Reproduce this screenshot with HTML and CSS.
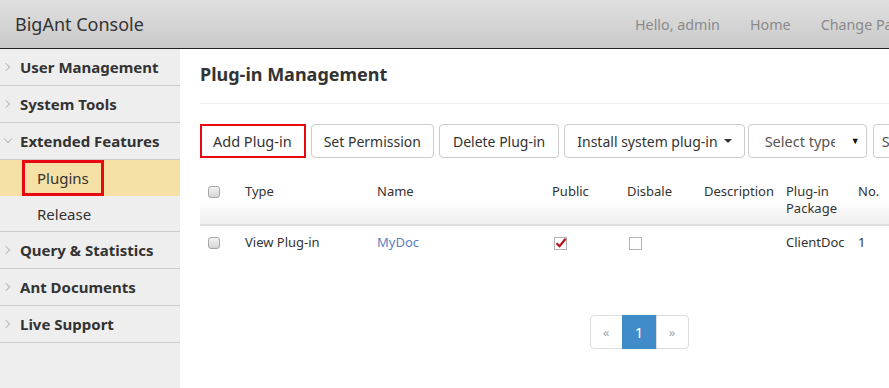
FILE: index.html
```html
<!DOCTYPE html>
<html>
<head>
<meta charset="utf-8">
<link rel="stylesheet" href="styles.css">
</head>
<body>
<div class="page">
  <header class="topbar">
    <div class="brand">BigAnt Console</div>
    <nav class="topnav">
      <a class="toplink">Hello, admin</a>
      <a class="toplink">Home</a>
      <a class="toplink">Change Password</a>
    </nav>
  </header>
  <div class="body">
    <aside class="sidebar">
      <div class="menu-item"><span class="chev right"></span>User Management</div>
      <div class="menu-item"><span class="chev right"></span>System Tools</div>
      <div class="menu-item"><span class="chev down"></span>Extended Features</div>
      <div class="submenu">
        <div class="sub-item active"><span class="hl">Plugins</span></div>
        <div class="sub-item last">Release</div>
      </div>
      <div class="menu-item"><span class="chev right"></span>Query &amp; Statistics</div>
      <div class="menu-item"><span class="chev right"></span>Ant Documents</div>
      <div class="menu-item"><span class="chev right"></span>Live Support</div>
    </aside>
    <main class="main">
      <h1 class="title">Plug-in Management</h1>
      <div class="toolbar">
        <span class="btn btn-marked">Add Plug-in</span>
        <span class="btn">Set Permission</span>
        <span class="btn btn-del">Delete Plug-in</span>
        <span class="btn">Install system plug-in <span class="caret"></span></span>
        <span class="select"><span class="select-text">Select type</span><span class="select-arrow">&#9660;</span></span>
        <span class="select select-2"><span class="select-text">Select status</span></span>
      </div>
      <table class="grid">
        <colgroup>
          <col class="c-cb"><col class="c-type"><col class="c-name"><col class="c-pub"><col class="c-dis"><col class="c-desc"><col class="c-pkg"><col class="c-no"><col class="c-rest">
        </colgroup>
        <thead>
          <tr>
            <th><span class="wcb"></span></th>
            <th>Type</th>
            <th>Name</th>
            <th>Public</th>
            <th>Disbale</th>
            <th>Description</th>
            <th>Plug-in Package</th>
            <th>No.</th>
            <th>Operation</th>
          </tr>
        </thead>
        <tbody>
          <tr>
            <td><span class="wcb"></span></td>
            <td>View Plug-in</td>
            <td><a class="link">MyDoc</a></td>
            <td><span class="sq checked"><svg viewBox="0 0 12 12" width="12" height="12"><path d="M1.5 6.2 L4.6 9.2 L10.6 1.8" fill="none" stroke="#b0141a" stroke-width="2.2"/></svg></span></td>
            <td><span class="sq"></span></td>
            <td></td>
            <td>ClientDoc</td>
            <td>1</td>
            <td></td>
          </tr>
        </tbody>
      </table>
      <div class="pager-wrap">
        <ul class="pager">
          <li class="pg">&laquo;</li>
          <li class="pg active">1</li>
          <li class="pg">&raquo;</li>
        </ul>
      </div>
    </main>
  </div>
</div>
</body>
</html>
```

FILE: styles.css
```css
html, body {
  margin: 0;
  padding: 0;
  overflow: hidden;
  background: #fff;
}
body {
  font-family: "Noto Sans", "Open Sans", sans-serif;
  font-size: 14px;
  color: #333;
}
.page {
  width: 1100px;
  height: 388px;
  display: flex;
  flex-direction: column;
}
.topbar {
  height: 48px;
  border-bottom: 1px solid #222;
  background: linear-gradient(#e0e0e0, #c9c9c9);
  display: flex;
  align-items: center;
  flex: 0 0 auto;
}
.brand {
  flex: 0 0 605px;
  padding-left: 15px;
  font-size: 18px;
  color: #333;
}
.topnav {
  display: flex;
}
.toplink {
  padding: 0 15px;
  font-size: 14.3px;
  color: #8a8a8a;
}
.body {
  flex: 1;
  display: flex;
}
.sidebar {
  flex: 0 0 180px;
  background: #eee;
}
.menu-item {
  height: 36px;
  border-bottom: 1px solid #ccc;
  display: flex;
  align-items: center;
  padding-left: 20px;
  font-weight: bold;
  font-size: 15px;
  color: #333;
  position: relative;
}
.chev {
  position: absolute;
  left: 4px;
  top: 15px;
  width: 5px;
  height: 5px;
  border-right: 1px solid #bbb;
  border-bottom: 1px solid #bbb;
}
.chev.right { transform: rotate(-45deg); left: 3px; }
.chev.down { transform: rotate(45deg); top: 13px; left: 5px; }
.submenu {
  border-bottom: 1px solid #ccc;
}
.sub-item {
  height: 36px;
  display: flex;
  align-items: center;
  padding-left: 37px;
  font-size: 15px;
  color: #333;
}
.sub-item.last {
  height: 35px;
}
.sub-item.active {
  background: #f5e1a5;
  padding-left: 22px;
}
.hl {
  box-sizing: border-box;
  height: 36px;
  border: 3px solid #e8080f;
  padding: 0 12px;
  display: flex;
  align-items: center;
}
.main {
  flex: 1;
  padding-left: 20px;
}
.title {
  margin: 0;
  padding: 13px 0 17px;
  font-size: 18px;
  line-height: 24px;
  font-weight: bold;
  color: #333;
  border-bottom: 1px solid #eee;
}
.toolbar {
  margin-top: 20px;
  display: flex;
  gap: 5px;
  align-items: center;
}
.btn {
  box-sizing: border-box;
  height: 34px;
  padding: 0 12px;
  border: 1px solid #ccc;
  border-radius: 4px;
  display: inline-flex;
  align-items: center;
  font-size: 14px;
  color: #333;
  white-space: nowrap;
}
.btn-marked {
  border: 2px solid #e8080f;
  border-radius: 0;
  padding: 0 12px 0 11px;
  font-size: 14.5px;
}
.btn-del {
  padding: 0 13px;
}
.caret {
  display: inline-block;
  margin-left: 6px;
  border-left: 4px solid transparent;
  border-right: 4px solid transparent;
  border-top: 4px solid #333;
}
.select {
  box-sizing: border-box;
  height: 34px;
  width: 119px;
  margin-left: -2px;
  border: 1px solid #ccc;
  border-radius: 4px;
  display: inline-flex;
  align-items: center;
  padding-left: 16px;
  font-size: 14.5px;
  color: #555;
  position: relative;
}
.select-text {
  width: 70px;
  overflow: hidden;
  white-space: nowrap;
}
.select-arrow {
  position: absolute;
  right: 6px;
  top: 9px;
  font-size: 9px;
  color: #111;
}
.select-2 {
  margin-left: 1px;
  padding-left: 8px;
}
.grid {
  margin-top: 12px;
  border-collapse: collapse;
  table-layout: fixed;
  width: 880px;
}
.c-cb { width: 37px; }
.c-type { width: 132px; }
.c-name { width: 175px; }
.c-pub { width: 75px; }
.c-dis { width: 77px; }
.c-desc { width: 82px; }
.c-pkg { width: 72px; }
.c-no { width: 60px; }
th {
  text-align: left;
  vertical-align: top;
  font-weight: normal;
  font-size: 13px;
  line-height: 17px;
  padding: 13px 8px 7px;
  color: #333;
  background: linear-gradient(#fff 55%, #efefef);
  border-bottom: 2px solid #ddd;
}
td {
  font-size: 13px;
  line-height: 17px;
  padding: 8px 8px 9px;
  color: #333;
  vertical-align: top;
}
.wcb {
  display: inline-block;
  box-sizing: border-box;
  width: 12px;
  height: 12px;
  border: 1px solid #a8a8a8;
  border-radius: 3px;
  background: linear-gradient(#f2f2f2, #d6d6d6);
  vertical-align: -2px;
}
.sq {
  display: inline-block;
  box-sizing: border-box;
  width: 13px;
  height: 13px;
  border: 1px solid #b4b4b4;
  background: #fff;
  vertical-align: -3px;
  margin-left: 2px;
  position: relative;
}
.sq svg {
  position: absolute;
  left: 0;
  top: -1px;
}
.link {
  color: #5a7fc6;
}
.pager-wrap {
  width: 878px;
  display: flex;
  justify-content: center;
  margin-top: 55px;
}
.pager {
  list-style: none;
  margin: 0;
  padding: 0;
  display: flex;
}
.pg {
  box-sizing: border-box;
  height: 34px;
  width: 33px;
  border: 1px solid #ddd;
  margin-left: -1px;
  display: flex;
  align-items: center;
  justify-content: center;
  color: #9ba6b5;
  font-size: 13px;
}
.pg:first-child { border-radius: 4px 0 0 4px; margin-left: 0; }
.pg:last-child { border-radius: 0 4px 4px 0; }
.pg.active {
  background: #428bca;
  border-color: #428bca;
  color: #fff;
  font-size: 15px;
  width: 35px;
}
```
